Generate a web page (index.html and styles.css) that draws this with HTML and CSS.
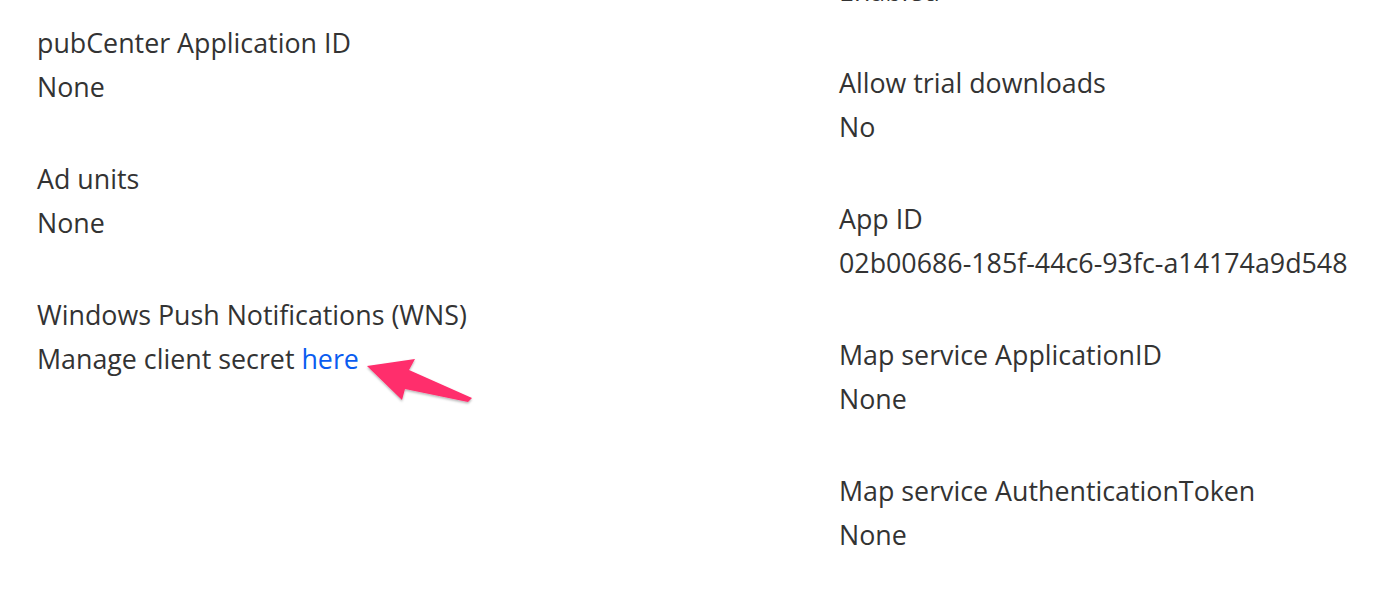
FILE: index.html
```html
<!DOCTYPE html>
<html lang="en">
<head>
<meta charset="utf-8">
<title>App identity</title>
<link rel="stylesheet" href="styles.css">
</head>
<body>
<div class="page">
  <div class="col col-left">
    <div class="field">
      <div class="label">pubCenter Application ID</div>
      <div class="value">None</div>
    </div>
    <div class="field">
      <div class="label">Ad units</div>
      <div class="value">None</div>
    </div>
    <div class="field">
      <div class="label">Windows Push Notifications (WNS)</div>
      <div class="value value-callout">Manage client secret <a class="link" href="#">here</a><svg class="arrow" width="120" height="60" viewBox="360 350 120 60" xmlns="http://www.w3.org/2000/svg"><defs><filter id="sh" x="-20%" y="-20%" width="140%" height="160%"><feDropShadow dx="0" dy="1.5" stdDeviation="1.2" flood-color="#000" flood-opacity="0.3"/></filter></defs><polygon filter="url(#sh)" fill="#ff2d6c" points="367,368 415,361 409,372 472,400 468,404 405,391 402,402"/></svg></div>
    </div>
  </div>
  <div class="col col-right">
    <div class="field">
      <div class="label">Category</div>
      <div class="value">Enabled</div>
    </div>
    <div class="field">
      <div class="label">Allow trial downloads</div>
      <div class="value">No</div>
    </div>
    <div class="field">
      <div class="label">App ID</div>
      <div class="value">02b00686-185f-44c6-93fc-a14174a9d548</div>
    </div>
    <div class="field">
      <div class="label">Map service ApplicationID</div>
      <div class="value">None</div>
    </div>
    <div class="field">
      <div class="label">Map service AuthenticationToken</div>
      <div class="value">None</div>
    </div>
  </div>
</div>
</body>
</html>
```
FILE: styles.css
```css
html, body {
  margin: 0;
  padding: 0;
  background: #ffffff;
  overflow: hidden;
}
body {
  font-family: "Open Sans", "Noto Sans", sans-serif;
  font-size: 26.8px;
  color: #333333;
}
.page {
  display: grid;
  grid-template-columns: 802px 1fr;
  padding-left: 37px;
  margin-top: -75px;
}
.col-left {
  padding-top: 96px;
}
.field {
  margin-bottom: 48px;
}
.label, .value {
  line-height: 44px;
  white-space: nowrap;
}
.value-callout {
  position: relative;
}
.link {
  color: #0a5cf0;
  text-decoration: none;
}
.arrow {
  position: absolute;
  left: 323px;
  top: 11px;
}
```
